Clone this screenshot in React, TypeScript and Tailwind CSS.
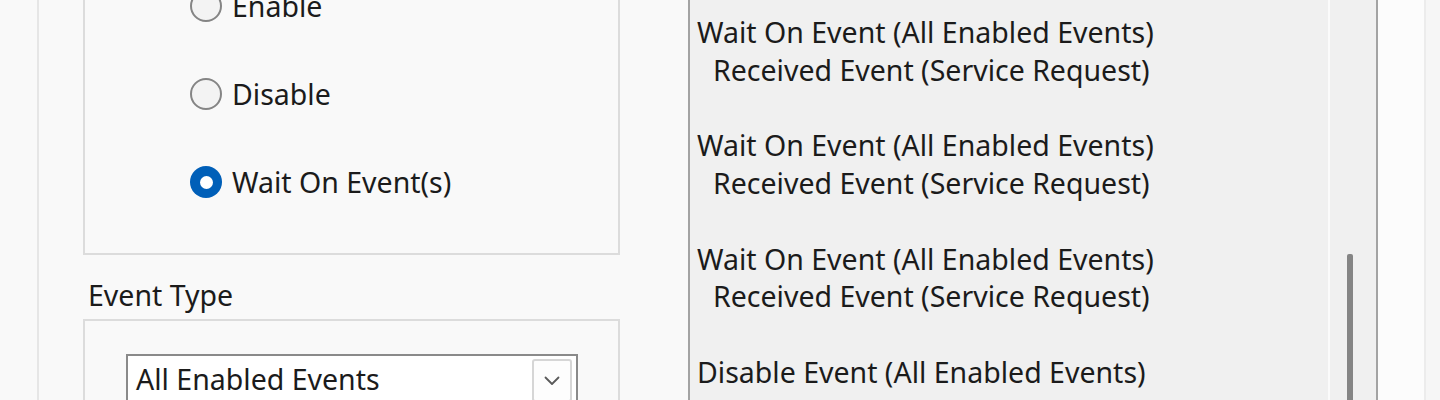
import React from "react";

const FONT = { fontFamily: '"Noto Sans", "Open Sans", sans-serif' };

function Radio({ label, checked }: { label: string; checked?: boolean }) {
  return (
    <div className="flex items-center h-[32px] shrink-0">
      {checked ? (
        <div className="w-[32px] h-[32px] rounded-full bg-[#005fb8] flex items-center justify-center shrink-0">
          <div className="w-[13px] h-[13px] rounded-full bg-white" />
        </div>
      ) : (
        <div className="w-[32px] h-[32px] rounded-full border-2 border-[#858585] bg-[#f3f3f3] shrink-0" />
      )}
      <span className="ml-[10px] text-[28.5px] text-[#1b1b1b] leading-none pt-[1px] whitespace-nowrap">{label}</span>
    </div>
  );
}

const entries: [string, string | null][] = [
  ["Wait On Event (All Enabled Events)", "Received Event (Service Request)"],
  ["Wait On Event (All Enabled Events)", "Received Event (Service Request)"],
  ["Wait On Event (All Enabled Events)", "Received Event (Service Request)"],
  ["Disable Event (All Enabled Events)", null],
];

export default function App() {
  return (
    <div className="flex h-[400px] w-[1440px] overflow-hidden bg-[#f9f9f9]" style={FONT}>
      <div className="w-[37px] shrink-0" />
      <div className="w-[2px] shrink-0 bg-[#e6e6e6]" />
      <div className="w-[44px] shrink-0" />

      {/* left column */}
      <div className="w-[537px] shrink-0 flex flex-col">
        <div className="-mt-[60px] h-[315px] shrink-0 border-2 border-[#dcdcdc] pl-[105px] pt-[48px] flex flex-col gap-[56px]">
          <Radio label="Enable" />
          <Radio label="Disable" />
          <Radio label="Wait On Event(s)" checked />
        </div>
        <div className="h-[64px] shrink-0 pl-[5px] pt-[24px] text-[28.5px] leading-[32px] text-[#1b1b1b]">Event Type</div>
        <div className="h-[200px] shrink-0 border-2 border-[#dcdcdc] pl-[41px] pt-[33px]">
          <div className="w-[452px] h-[54px] border-2 border-[#8a8a8a] bg-white flex items-start justify-between pl-[8px] pr-[4px] pt-[3px]">
            <span className="text-[28.5px] leading-[40px] text-[#1b1b1b]">All Enabled Events</span>
            <div className="w-[40px] h-[43px] border-2 border-[#d6d6d6] rounded-[3px] bg-[#fdfdfd] flex items-center justify-center">
              <svg width="16" height="10" viewBox="0 0 16 10" fill="none">
                <path d="M1.5 1.5 L8 8 L14.5 1.5" stroke="#5a5a5a" strokeWidth="1.8" strokeLinecap="round" strokeLinejoin="round" />
              </svg>
            </div>
          </div>
        </div>
      </div>

      <div className="w-[68px] shrink-0" />

      {/* list box */}
      <div className="w-[690px] shrink-0 border-x-2 border-[#a3a3a3] bg-[#f0f0f0] flex">
        <div className="w-[638px] shrink-0 pl-[7px] pt-[14px] text-[28.5px] leading-[37.75px] text-[#1b1b1b] whitespace-nowrap">
          {entries.map(([a, b], i) => (
            <div key={i} className="mb-[37.75px]">
              <div>{a}</div>
              {b && <div className="pl-[16px]">{b}</div>}
            </div>
          ))}
        </div>
        <div className="w-[2px] shrink-0 bg-[#fbfbfb]" />
        <div className="w-[45px] shrink-0 pl-[17px] pt-[254px]">
          <div className="w-[6px] h-[300px] bg-[#858585] rounded-[2px]" />
        </div>
      </div>

      <div className="w-[46px] shrink-0 bg-[#fcfcfc]" />
      <div className="w-[2px] shrink-0 bg-[#ececec]" />
      <div className="flex-1 bg-[#f6f6f6]" />
    </div>
  );
}
